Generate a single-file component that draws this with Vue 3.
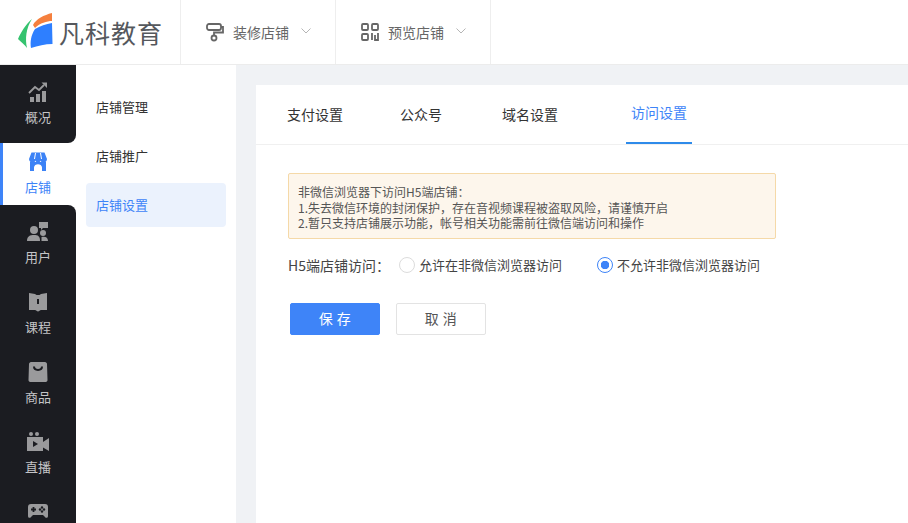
<script setup>
const navItems = [
  { label: '概况', key: 'chart', cls: 'first before-active' },
  { label: '店铺', key: 'shop', cls: 'active' },
  { label: '用户', key: 'user', cls: 'after-active' },
  { label: '课程', key: 'book', cls: '' },
  { label: '商品', key: 'bag', cls: '' },
  { label: '直播', key: 'live', cls: '' },
  { label: '', key: 'game', cls: '' }
]
const subItems = [
  { label: '店铺管理', active: false },
  { label: '店铺推广', active: false },
  { label: '店铺设置', active: true }
]
const tabs = [
  { label: '支付设置', active: false },
  { label: '公众号', active: false },
  { label: '域名设置', active: false },
  { label: '访问设置', active: true }
]
</script>

<template>
  <div class="page">
    <header class="header">
      <div class="logo-cell">
        <svg class="logo-mark" width="36" height="40" viewBox="0 0 36 40">
          <path d="M14 8 C8 13 3 21 0 28 C3 31 7 34 9 37 C7 28 8 17 14 8Z" fill="#35c36f"/>
          <path d="M15 14 C18 8 26 4 34 2 L34 10 C29 10 22 12 17 17Z" fill="#f5803e"/>
          <path d="M17 18 C22 15 28 13 34 12 L34.500 33 C27 33 20 35 13 37 C12 31 13 24 17 18Z" fill="#2e7fff"/>
        </svg>
        <span class="logo-text">凡科教育</span>
      </div>
      <div class="head-cell">
        <svg class="head-icon" width="18" height="20" viewBox="0 0 18 20" fill="none" stroke="#666" stroke-width="1.800">
          <rect x="1" y="2" width="14" height="6" rx="2"/>
          <path d="M15 5 H17 V10.500 H8 V13"/>
          <circle cx="8" cy="16" r="2.500"/>
        </svg>
        <span class="head-text">装修店铺</span>
        <svg class="chev" width="10" height="6" viewBox="0 0 10 6" fill="none" stroke="#b5b5b5"><path d="M0.500 0.500 L5 5 L9.500 0.500"/></svg>
      </div>
      <div class="head-cell">
        <svg class="head-icon" width="18" height="18" viewBox="0 0 18 18" fill="none" stroke="#666" stroke-width="1.800">
          <rect x="1" y="1" width="6" height="6" rx="1"/>
          <rect x="11" y="1" width="6" height="6" rx="1"/>
          <rect x="1" y="11" width="6" height="6" rx="1"/>
          <path d="M11 10 V17 M14 12 V17 H17 V10"/>
        </svg>
        <span class="head-text">预览店铺</span>
        <svg class="chev" width="10" height="6" viewBox="0 0 10 6" fill="none" stroke="#b5b5b5"><path d="M0.500 0.500 L5 5 L9.500 0.500"/></svg>
      </div>
    </header>

    <div class="body">
      <nav class="nav">
        <div v-for="item in navItems" :key="item.key" class="nav-item" :class="item.cls">
          <svg class="nav-icon" width="22" height="22" viewBox="0 0 22 22" fill="currentColor">
            <template v-if="item.key === 'chart'">
              <rect x="3" y="16" width="4" height="5"/>
              <rect x="9" y="13" width="4" height="8"/>
              <rect x="15" y="10" width="4" height="11"/>
              <path d="M2 12 L8 6 L12 9 L17 4" fill="none" stroke="currentColor" stroke-width="1.800"/>
              <path d="M14.500 1.500 H20 V7Z"/>
            </template>
            <template v-else-if="item.key === 'shop'">
              <path d="M4.500 1.500 H17.500 L20 8 C20 10.500 18 11.500 16.500 11.500 C15 11.500 14 11 13.500 9.500 C13 11 12.500 11.500 11 11.500 C9.500 11.500 9 11 8.500 9.500 C8 11 7 11.500 5.500 11.500 C4 11.500 2 10.500 2 8Z"/>
              <path d="M3 11 H19 V20 H15 V16.500 C15 12 7 12 7 16.500 V20 H3Z"/>
              <path d="M8.500 2 L7.500 8 M13.500 2 L14.500 8" stroke="#fff" stroke-width="1"/>
            </template>
            <template v-else-if="item.key === 'user'">
              <path d="M12 1 H21 V7 H16 L14 9 V7 H12Z"/>
              <circle cx="7" cy="9" r="4"/>
              <path d="M0 20 C0 15 3 14 7 14 C11 14 13 15 13 20Z"/>
              <circle cx="16" cy="12" r="3"/>
              <path d="M14.500 16 C18 15 21 16 21 20 H14.500Z"/>
            </template>
            <template v-else-if="item.key === 'book'">
              <path d="M2 2 L8 3 C9 4 10 4 11 4 C12 4 13 4 14 3 L20 2 V19 L14 19 C13 19 12 20.500 11 20.500 C10 20.500 9 19 8 19 L2 19Z"/>
              <rect x="10" y="8" width="2" height="5" fill="#1b1c21"/>
            </template>
            <template v-else-if="item.key === 'bag'">
              <path d="M4 1 H18 C19 1 20 2 20 3 L20.500 19 C20.500 20.500 19.500 21 18 21 H4 C2.500 21 1.500 20.500 1.500 19 L2 3 C2 2 3 1 4 1Z"/>
              <path d="M7 5.500 C7 10 15 10 15 5.500" fill="none" stroke="#1b1c21" stroke-width="2"/>
            </template>
            <template v-else-if="item.key === 'live'">
              <circle cx="4" cy="3" r="2"/>
              <circle cx="10" cy="3" r="2"/>
              <path d="M0 6 H16 V11 L22 7 V20 L16 16.500 V20 H0Z"/>
              <path d="M6 10 L11 13 L6 16Z" fill="#1b1c21"/>
            </template>
            <template v-else>
              <path d="M4 3 H18 C20 3 21 4 21 6 V15 C21 17 19 17.500 18 16 L16 14 H6 L4 16 C3 17.500 1 17 1 15 V6 C1 4 2 3 4 3Z"/>
              <path d="M4 8.500 H9 M6.500 6 V11" stroke="#1b1c21" stroke-width="1.800"/>
              <circle cx="15" cy="6.500" r="1.200" fill="#1b1c21"/>
              <circle cx="15" cy="10.500" r="1.200" fill="#1b1c21"/>
              <circle cx="13" cy="8.500" r="1.200" fill="#1b1c21"/>
              <circle cx="17" cy="8.500" r="1.200" fill="#1b1c21"/>
            </template>
          </svg>
          <span v-if="item.label" class="nav-label">{{ item.label }}</span>
        </div>
      </nav>

      <aside class="sub">
        <div v-for="s in subItems" :key="s.label" class="sub-item" :class="{ on: s.active }">{{ s.label }}</div>
      </aside>

      <main class="main">
        <section class="card">
          <div class="tabs">
            <div v-for="t in tabs" :key="t.label" class="tab" :class="{ on: t.active }">{{ t.label }}</div>
          </div>
          <div class="content">
            <div class="alert">
              <div>非微信浏览器下访问H5端店铺：</div>
              <div>1.失去微信环境的封闭保护，存在音视频课程被盗取风险，请谨慎开启</div>
              <div>2.暂只支持店铺展示功能，帐号相关功能需前往微信端访问和操作</div>
            </div>
            <div class="form-row">
              <span class="form-label">H5端店铺访问：</span>
              <label class="radio"><i class="dot"></i>允许在非微信浏览器访问</label>
              <label class="radio checked"><i class="dot"></i>不允许非微信浏览器访问</label>
            </div>
            <div class="actions">
              <button class="btn primary">保 存</button>
              <button class="btn">取 消</button>
            </div>
          </div>
        </section>
      </main>
    </div>
  </div>
</template>

<style>
html, body { margin: 0; overflow: hidden; }
</style>

<style scoped>
.page {
  width: 908px;
  height: 523px;
  overflow: hidden;
  display: flex;
  flex-direction: column;
  font-family: "Noto Sans CJK SC", "Liberation Sans", sans-serif;
  color: #333;
  background: #f0f2f5;
}
.header {
  height: 64px;
  flex: none;
  display: flex;
  background: #fff;
  border-bottom: 1px solid #ececec;
}
.logo-cell {
  width: 181px;
  display: flex;
  align-items: center;
  padding-left: 18px;
  box-sizing: border-box;
  border-right: 1px solid #eee;
}
.logo-mark { flex: none; margin-top: -3px; }
.logo-text {
  margin-left: 5px;
  font-size: 25px;
  letter-spacing: 1px;
  color: #55585d;
  line-height: 30px;
}
.head-cell {
  width: 155px;
  box-sizing: border-box;
  display: flex;
  align-items: center;
  padding-left: 25px;
  border-right: 1px solid #eee;
}
.head-icon { flex: none; width: 18px; }
.head-text { margin-left: 9px; font-size: 14px; color: #666; width: 56px; }
.chev { margin-left: 12px; margin-top: -2px; }
.body { flex: 1; display: flex; min-height: 0; }
.nav {
  width: 76px;
  flex: none;
  background: #fff;
}
.nav-item {
  height: 70px;
  box-sizing: border-box;
  padding-top: 16px;
  background: #1b1c21;
  color: #9a9a9c;
  display: flex;
  flex-direction: column;
  align-items: center;
}
.nav-item.first { height: 78px; }
.nav-item.before-active { border-bottom-right-radius: 8px; }
.nav-item.after-active { border-top-right-radius: 8px; }
.nav-item.active {
  height: 62px;
  padding-top: 8px;
  background: #fff;
  color: #3b82f6;
  border-left: 3px solid #3e84f8;
  padding-right: 3px;
}
.nav-icon { flex: none; }
.nav-label {
  margin-top: 4px;
  font-size: 13px;
  line-height: 20px;
  color: #c4c4c6;
}
.active .nav-label { color: #3e84f8; }
.sub {
  width: 160px;
  flex: none;
  box-sizing: border-box;
  padding: 20px 10px 0;
  background: #fff;
}
.sub-item {
  height: 44px;
  margin-bottom: 5px;
  padding-left: 10px;
  line-height: 44px;
  font-size: 13px;
  border-radius: 4px;
  color: #333;
}
.sub-item.on { background: #ebf2fd; color: #3e84f8; }
.main { flex: 1; min-width: 0; padding: 20px 0 0 20px; }
.card { height: 100%; background: #fff; }
.tabs {
  height: 59px;
  padding-left: 31px;
  display: flex;
  border-bottom: 1px solid #f0f0f0;
}
.tab {
  height: 59px;
  line-height: 58px;
  font-size: 14px;
  box-sizing: border-box;
}
.tab:nth-child(2) { margin-left: 57px; }
.tab:nth-child(3) { margin-left: 60px; }
.tab.on {
  margin-left: 68px;
  padding: 0 5px;
  line-height: 54px;
  color: #3e84f8;
  border-bottom: 2px solid #2e8bea;
}
.content { padding: 28px 0 0 32px; }
.alert {
  width: 488px;
  height: 66px;
  box-sizing: border-box;
  padding: 10px 9px 0;
  background: #fdf6ec;
  border: 1px solid #f5d9a8;
  border-radius: 2px;
  font-size: 12px;
  line-height: 15.700px;
  color: #555;
}
.form-row {
  margin-top: 16px;
  height: 20px;
  display: flex;
  align-items: center;
  font-size: 13px;
  line-height: 20px;
  color: #444;
}
.form-label { width: 111px; flex: none; font-size: 14px; }
.radio { display: flex; align-items: center; width: 198px; flex: none; }
.dot {
  width: 16px;
  height: 16px;
  box-sizing: border-box;
  margin-right: 4px;
  border: 1px solid #dcdcdc;
  border-radius: 50%;
  background: #fff;
}
.checked .dot {
  border: 1px solid #3e84f8;
  background: radial-gradient(circle, #3e84f8 0 4px, #fff 4.500px);
}
.actions { margin: 28px 0 0 2px; display: flex; gap: 16px; }
.btn {
  width: 90px;
  height: 32px;
  padding: 0 0 2px;
  border: 1px solid #e3e3e3;
  border-radius: 2px;
  background: #fff;
  color: #555;
  font-family: inherit;
  font-size: 14px;
  letter-spacing: 0.500px;
}
.btn.primary { background: #3e84f8; border-color: #3e84f8; color: #fff; }
</style>
